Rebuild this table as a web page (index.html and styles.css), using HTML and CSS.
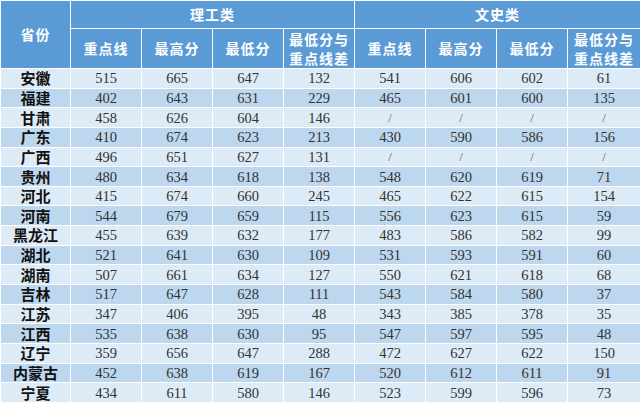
FILE: index.html
```html
<!DOCTYPE html>
<html lang="zh">
<head>
<meta charset="utf-8">
<link rel="stylesheet" href="styles.css">
</head>
<body>
<table class="score">
  <colgroup>
    <col class="c-prov"><col class="c"><col class="c"><col class="c"><col class="c"><col class="c"><col class="c"><col class="c"><col class="c-last">
  </colgroup>
  <thead>
    <tr class="h1">
      <th rowspan="2">省份</th>
      <th colspan="4">理工类</th>
      <th colspan="4">文史类</th>
    </tr>
    <tr class="h2">
      <th>重点线</th><th>最高分</th><th>最低分</th><th>最低分与<br>重点线差</th>
      <th>重点线</th><th>最高分</th><th>最低分</th><th>最低分与<br>重点线差</th>
    </tr>
  </thead>
  <tbody>
    <tr><th>安徽</th><td>515</td><td>665</td><td>647</td><td>132</td><td>541</td><td>606</td><td>602</td><td>61</td></tr>
    <tr><th>福建</th><td>402</td><td>643</td><td>631</td><td>229</td><td>465</td><td>601</td><td>600</td><td>135</td></tr>
    <tr><th>甘肃</th><td>458</td><td>626</td><td>604</td><td>146</td><td class="na">/</td><td class="na">/</td><td class="na">/</td><td class="na">/</td></tr>
    <tr><th>广东</th><td>410</td><td>674</td><td>623</td><td>213</td><td>430</td><td>590</td><td>586</td><td>156</td></tr>
    <tr><th>广西</th><td>496</td><td>651</td><td>627</td><td>131</td><td class="na">/</td><td class="na">/</td><td class="na">/</td><td class="na">/</td></tr>
    <tr><th>贵州</th><td>480</td><td>634</td><td>618</td><td>138</td><td>548</td><td>620</td><td>619</td><td>71</td></tr>
    <tr><th>河北</th><td>415</td><td>674</td><td>660</td><td>245</td><td>465</td><td>622</td><td>615</td><td>154</td></tr>
    <tr><th>河南</th><td>544</td><td>679</td><td>659</td><td>115</td><td>556</td><td>623</td><td>615</td><td>59</td></tr>
    <tr><th>黑龙江</th><td>455</td><td>639</td><td>632</td><td>177</td><td>483</td><td>586</td><td>582</td><td>99</td></tr>
    <tr><th>湖北</th><td>521</td><td>641</td><td>630</td><td>109</td><td>531</td><td>593</td><td>591</td><td>60</td></tr>
    <tr><th>湖南</th><td>507</td><td>661</td><td>634</td><td>127</td><td>550</td><td>621</td><td>618</td><td>68</td></tr>
    <tr><th>吉林</th><td>517</td><td>647</td><td>628</td><td>111</td><td>543</td><td>584</td><td>580</td><td>37</td></tr>
    <tr><th>江苏</th><td>347</td><td>406</td><td>395</td><td>48</td><td>343</td><td>385</td><td>378</td><td>35</td></tr>
    <tr><th>江西</th><td>535</td><td>638</td><td>630</td><td>95</td><td>547</td><td>597</td><td>595</td><td>48</td></tr>
    <tr><th>辽宁</th><td>359</td><td>656</td><td>647</td><td>288</td><td>472</td><td>627</td><td>622</td><td>150</td></tr>
    <tr><th>内蒙古</th><td>452</td><td>638</td><td>619</td><td>167</td><td>520</td><td>612</td><td>611</td><td>91</td></tr>
    <tr><th>宁夏</th><td>434</td><td>611</td><td>580</td><td>146</td><td>523</td><td>599</td><td>596</td><td>73</td></tr>
  </tbody>
</table>
</body>
</html>
```
FILE: styles.css
```css
html, body {
  margin: 0;
  padding: 0;
  background: #ffffff;
}
.score {
  width: 640px;
  table-layout: fixed;
  border-collapse: collapse;
  font-family: "Liberation Serif", "Noto Sans CJK SC", serif;
}
.c-prov { width: 70px; }
.c { width: 71px; }
.c-last { width: 73px; }
.score th,
.score td {
  border: 1px solid #ffffff;
  padding: 0;
  text-align: center;
  vertical-align: middle;
  overflow: hidden;
}
.score thead th {
  background: #5b9bd5;
  color: #ffffff;
  font-family: "Noto Sans CJK SC", sans-serif;
  font-weight: 700;
  font-size: 14px;
  letter-spacing: 1px;
  line-height: 19px;
}
.score .h1 th { height: 27px; }
.score .h2 th { height: 39px; }
.score tbody tr { height: 19.65px; }
.score tbody tr:nth-child(odd) th,
.score tbody tr:nth-child(odd) td { background: #ddebf7; }
.score tbody tr:nth-child(even) th,
.score tbody tr:nth-child(even) td { background: #bdd7ee; }
.score tbody th {
  font-family: "Noto Sans CJK SC", sans-serif;
  font-weight: 700;
  font-size: 15px;
  color: #111111;
  line-height: 18px;
}
.score tbody td {
  font-size: 14.5px;
  color: #333333;
  line-height: 18px;
}
.score tbody td.na {
  color: #666666;
  font-size: 13px;
}
```
